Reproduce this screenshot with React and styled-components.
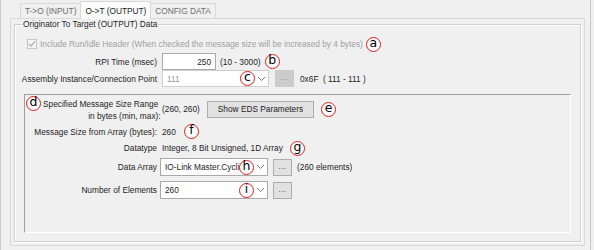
import React from 'react';
import styled, { createGlobalStyle } from 'styled-components';

const Global = createGlobalStyle`
  body {
    margin: 0;
    background: #f0f0f0;
    font-family: "Liberation Sans", Arial, sans-serif;
    font-size: 8.3px;
    color: #1e1e1e;
  }
`;

const Page = styled.div`
  width: 594px;
  height: 250px;
  overflow: hidden;
  position: relative;
  background: #f0f0f0;
  border-left: 1px solid #c8c8c8;
  box-sizing: border-box;
  padding-left: 9px;
`;

const EdgeLine = styled.div`
  position: absolute;
  top: 0;
  bottom: 0;
  left: ${(p) => p.x}px;
  width: 1px;
  background: ${(p) => p.color};
`;

const TabStrip = styled.div`
  display: flex;
  align-items: flex-end;
  height: 18px;
  padding-left: 11px;
`;

const Tab = styled.div`
  height: ${(p) => (p.active ? 17 : 14)}px;
  padding: 0 4px;
  display: flex;
  align-items: center;
  border: 1px solid #d9d9d9;
  border-bottom: none;
  margin-left: -1px;
  background: ${(p) => (p.active ? '#fbfbfb' : '#f0f0f0')};
  color: ${(p) => (p.active ? '#1e1e1e' : '#6d6d6d')};
  position: relative;
  z-index: ${(p) => (p.active ? 2 : 1)};
  margin-bottom: ${(p) => (p.active ? -1 : 0)}px;
`;

const TabPage = styled.div`
  width: 575px;
  height: 228px;
  box-sizing: border-box;
  border: 1px solid #d9d9d9;
  padding: 0 3px 3px 3px;
`;

const GroupBox = styled.fieldset`
  margin: 0;
  height: 223px;
  box-sizing: border-box;
  border: 1px solid #d0d0d0;
  box-shadow: inset 1px 1px 0 #ffffff, 1px 1px 0 #ffffff;
  padding: 0 8px 0 9px;
  min-width: 0;
`;

const Legend = styled.legend`
  padding: 0 1px;
  margin-left: -2px;
  line-height: 10px;
  color: #1e1e1e;
`;

const CheckRow = styled.div`
  display: flex;
  align-items: center;
  height: 14px;
  margin-top: 8px;
  padding-left: 3px;
  color: #a0a0a0;
  gap: 3px;
  white-space: nowrap;
`;

const CheckBox = styled.span`
  width: 10px;
  height: 10px;
  border: 1px solid #c6c6c6;
  background: #f4f4f4;
  box-sizing: border-box;
  display: flex;
  align-items: center;
  justify-content: center;
`;

const Row = styled.div`
  display: grid;
  grid-template-columns: ${(p) => p.$label}px auto;
  justify-content: start;
  column-gap: ${(p) => p.$gap ?? 5}px;
  align-items: center;
  height: ${(p) => p.$h}px;
  margin-top: ${(p) => p.$top || 0}px;
`;

const Label = styled.div`
  display: flex;
  flex-direction: column;
  align-items: flex-end;
  line-height: 12px;
  white-space: nowrap;
`;

const Fields = styled.div`
  display: flex;
  align-items: center;
  gap: ${(p) => p.$gap ?? 4}px;
  white-space: nowrap;
`;

const Input = styled.div`
  width: ${(p) => p.$w}px;
  height: ${(p) => p.$height || 17}px;
  box-sizing: border-box;
  border: 1px solid #a9a9a9;
  background: #ffffff;
  display: flex;
  align-items: center;
  justify-content: ${(p) => (p.$right ? 'flex-end' : 'flex-start')};
  padding: 0 4px;
  color: ${(p) => (p.$disabled ? '#9a9a9a' : '#1e1e1e')};
`;

const Combo = styled(Input)`
  position: relative;
  padding-right: 0;
  overflow: hidden;
  border-color: ${(p) => (p.$disabled ? '#cfcfcf' : '#a9a9a9')};
`;

const ComboText = styled.span`
  overflow: hidden;
  flex: 1;
  min-width: 0;
`;

const Arrow = styled.span`
  width: 13px;
  height: 15px;
  display: flex;
  align-items: center;
  justify-content: center;
  flex: none;
`;

const DotsButton = styled.div`
  width: 19px;
  height: 17px;
  box-sizing: border-box;
  border: 1px solid ${(p) => (p.$disabled ? '#cccccc' : '#adadad')};
  background: ${(p) => (p.$disabled ? '#cccccc' : '#e1e1e1')};
  color: ${(p) => (p.$disabled ? '#8a8a8a' : '#1e1e1e')};
  display: flex;
  align-items: center;
  justify-content: center;
  padding-bottom: 2px;
  font-size: 8px;
  letter-spacing: 0.5px;
`;

const Button = styled.div`
  height: 17px;
  box-sizing: border-box;
  border: 1px solid #adadad;
  background: #e1e1e1;
  padding: 0 10px;
  display: flex;
  align-items: center;
`;

const InnerBox = styled.div`
  margin: 7px 1px 0 0;
  height: 139px;
  box-sizing: border-box;
  border-top: 1px solid #a0a0a0;
  border-left: 1px solid #a0a0a0;
  border-right: 1px solid #ffffff;
  border-bottom: 1px solid #ffffff;
`;

const Badge = styled.span`
  width: 15px;
  height: 15px;
  box-sizing: border-box;
  border-radius: 50%;
  border: 1.6px solid #e01b1b;
  background: #ffffff;
  color: #000000;
  display: inline-flex;
  align-items: center;
  justify-content: center;
  font-family: "DejaVu Sans", sans-serif;
  font-size: 12.5px;
  line-height: 1;
  padding-bottom: 2px;
  flex: none;
`;

/* annotation circle sitting over a combo box's text */
const OverBadge = styled(Badge)`
  position: absolute;
  right: 13px;
  top: 50%;
  margin-top: -7.5px;
`;

const HeadLabel = styled.div`
  display: flex;
  align-items: flex-start;
  justify-content: space-between;
  gap: 2px;
  height: 100%;
  padding: 1px 0 0 1px;
  box-sizing: border-box;
`;

const HeadText = styled(Label)`
  padding-top: 2px;
`;

const chevron = (
  <svg width="9" height="6" viewBox="0 0 9 6">
    <path d="M1 1l3.5 3.5L8 1" fill="none" stroke="#7a7a7a" strokeWidth="1" />
  </svg>
);

export default function App() {
  return (
    <Page>
      <Global />
      <EdgeLine x={589} color="#c8c8c8" />
      <TabStrip>
        <Tab>T-&gt;O (INPUT)</Tab>
        <Tab active>O-&gt;T (OUTPUT)</Tab>
        <Tab>CONFIG DATA</Tab>
      </TabStrip>
      <TabPage>
        <GroupBox>
          <Legend>Originator To Target (OUTPUT) Data</Legend>
          <CheckRow>
            <CheckBox>
              <svg width="8" height="8" viewBox="0 0 8 8">
                <path d="M1 4l2 2L7 1.5" fill="none" stroke="#b4b4b4" strokeWidth="1.3" />
              </svg>
            </CheckBox>
            <span>Include Run/Idle Header (When checked the message size will be increased by 4 bytes)</span>
            <Badge>a</Badge>
          </CheckRow>
          <Row $h={17} $label={133} $top={2}>
            <Label>RPI Time (msec)</Label>
            <Fields $gap={4}>
              <Input $w={54} $right>250</Input>
              <span>(10 - 3000)</span>
              <Badge>b</Badge>
            </Fields>
          </Row>
          <Row $h={17} $label={133}>
            <Label>Assembly Instance/Connection Point</Label>
            <Fields $gap={6}>
              <Combo $w={107} $disabled>
                <ComboText>111</ComboText>
                <OverBadge>c</OverBadge>
                <Arrow>{chevron}</Arrow>
              </Combo>
              <DotsButton $disabled>...</DotsButton>
              <span>0x6F &nbsp;( 111 - 111 )</span>
            </Fields>
          </Row>
          <InnerBox>
            <Row $h={28} $label={132}>
              <HeadLabel>
                <Badge>d</Badge>
                <HeadText>
                  <span>Specified Message Size Range&nbsp;</span>
                  <span>in bytes (min, max):</span>
                </HeadText>
              </HeadLabel>
              <Fields $gap={7}>
                <span>(260, 260)</span>
                <Button>Show EDS Parameters</Button>
                <Badge>e</Badge>
              </Fields>
            </Row>
            <Row $h={17} $label={132}>
              <Label>Message Size from Array (bytes):</Label>
              <Fields $gap={8}>
                <span>260</span>
                <Badge>f</Badge>
              </Fields>
            </Row>
            <Row $h={16} $label={132}>
              <Label>Datatype</Label>
              <Fields $gap={7}>
                <span>Integer, 8 Bit Unsigned, 1D Array</span>
                <Badge>g</Badge>
              </Fields>
            </Row>
            <Row $h={22} $label={132} $gap={3}>
              <Label>Data Array</Label>
              <Fields $gap={5}>
                <Combo $w={108} $height={18}>
                  <ComboText>IO-Link Master.Cyclic</ComboText>
                  <OverBadge>h</OverBadge>
                  <Arrow>{chevron}</Arrow>
                </Combo>
                <DotsButton>...</DotsButton>
                <span>(260 elements)</span>
              </Fields>
            </Row>
            <Row $h={24} $label={132} $gap={3}>
              <Label>Number of Elements</Label>
              <Fields $gap={5}>
                <Combo $w={108} $height={18}>
                  <ComboText>260</ComboText>
                  <OverBadge>i</OverBadge>
                  <Arrow>{chevron}</Arrow>
                </Combo>
                <DotsButton>...</DotsButton>
              </Fields>
            </Row>
          </InnerBox>
        </GroupBox>
      </TabPage>
    </Page>
  );
}
